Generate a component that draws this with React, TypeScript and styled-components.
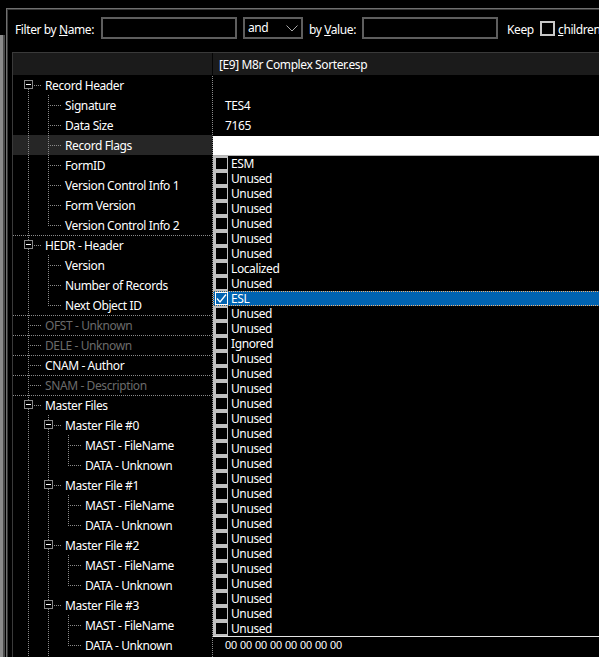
import React from 'react';
import styled, { createGlobalStyle, css } from 'styled-components';

const FONT = `"Noto Sans", "Open Sans", sans-serif`;
const LINE = '#8a8a8a';
const dotV = `repeating-linear-gradient(to bottom, ${LINE} 0 1px, transparent 1px 2px)`;
const dotH = `repeating-linear-gradient(to right, ${LINE} 0 1px, transparent 1px 2px)`;

const Global = createGlobalStyle`
  html, body { margin: 0; padding: 0; background: #000; }
  body { font-family: ${FONT}; font-size: 12px; letter-spacing: -0.4px; color: #fff; }
  * { box-sizing: border-box; }
`;

const Screen = styled.div`
  width: 599px;
  height: 657px;
  overflow: hidden;
  display: flex;
  background: #000;
`;

const Gutter = styled.div`
  flex: 0 0 5px;
  padding-top: 35px;
  display: flex;
`;

const GutterBar = styled.div`
  flex: 1;
  background: linear-gradient(to right, #8c8c8c 0 3px, #4a4a4a 3px 5px);
`;

const Panel = styled.div`
  flex: 0 0 620px;
  margin: 8px 0 0 1px;
  border-top: 1px solid #707070;
  border-left: 1px solid #707070;
  box-shadow: inset 1px 1px 0 #383838;
  display: flex;
  flex-direction: column;
`;

const FilterBar = styled.div`
  display: flex;
  align-items: center;
  padding: 8px 0 13px 8px;
  height: 43px;
  flex: 0 0 auto;
`;

const Label = styled.span<{ $w: number; $gap?: number }>`
  flex: 0 0 ${(p) => p.$w}px;
  margin-left: ${(p) => p.$gap ?? 0}px;
  white-space: nowrap;
  line-height: 22px;
  padding-top: 4px;
  color: #fff;
`;

const TextBox = styled.div`
  flex: 0 0 136px;
  height: 22px;
  border: 2px solid #5e5e5e;
  background: #000;
`;

const Combo = styled.div`
  flex: 0 0 60px;
  height: 22px;
  margin: 0 6px;
  border: 2px solid #5e5e5e;
  background: #000;
  display: flex;
  align-items: center;
  justify-content: space-between;
  padding: 0 3px 0 3px;
  line-height: 18px;
`;

const KeepBox = styled.div`
  flex: 0 0 15px;
  height: 15px;
  border: 2px solid #c8c8c8;
  background: #000;
  margin-right: 3px;
`;

const Grid = styled.div`
  flex: 1;
  margin-left: 5px;
  border-left: 1px solid #3a3a3a;
  border-top: 1px solid #3a3a3a;
  display: flex;
  flex-direction: column;
  min-height: 0;
`;

const Header = styled.div`
  display: flex;
  height: 22px;
  flex: 0 0 22px;
  background: #1b1b1b;
`;

const HeaderCell = styled.div<{ $w?: number }>`
  ${(p) =>
    p.$w
      ? css`
          flex: 0 0 ${p.$w}px;
          border-right: 1px solid #050505;
        `
      : css`
          flex: 1;
          padding: 1px 0 0 6px;
        `}
  line-height: 21px;
  white-space: nowrap;
`;

const Body = styled.div`
  display: flex;
  flex: 1;
  min-height: 0;
`;

const TreeCol = styled.div`
  flex: 0 0 200px;
  padding-right: 1px;
  background-image: ${dotV};
  background-size: 1px 100%;
  background-position: 199px 1px;
  background-repeat: no-repeat;
`;

const TreeRow = styled.div<{ $selected?: boolean; $sepTop?: boolean }>`
  height: 20px;
  display: flex;
  padding-left: 5px;
  background-color: ${(p) => (p.$selected ? '#262626' : 'transparent')};
  ${(p) =>
    p.$sepTop &&
    css`
      background-image: ${dotH};
      background-size: 100% 1px;
      background-position: 0 0;
      background-repeat: no-repeat;
    `}
`;

type VKind = 'none' | 'full' | 'top' | 'bottom';

const vLayer = (k: VKind) => {
  if (k === 'full') return { img: dotV, size: '1px 100%', pos: '10px 0' };
  if (k === 'top') return { img: dotV, size: '1px 11px', pos: '10px 0' };
  if (k === 'bottom') return { img: dotV, size: '1px 10px', pos: '10px 10px' };
  return null;
};

const Guide = styled.div<{ $v: VKind; $conn?: boolean }>`
  flex: 0 0 ${(p) => (p.$conn ? 24 : 20)}px;
  height: 20px;
  display: flex;
  align-items: flex-start;
  ${(p) => {
    const layers: { img: string; size: string; pos: string }[] = [];
    const v = vLayer(p.$v);
    if (v) layers.push(v);
    if (p.$conn) layers.push({ img: dotH, size: '13px 1px', pos: '10px 10px' });
    if (!layers.length) return '';
    return css`
      background-image: ${layers.map((l) => l.img).join(', ')};
      background-size: ${layers.map((l) => l.size).join(', ')};
      background-position: ${layers.map((l) => l.pos).join(', ')};
      background-repeat: no-repeat;
    `;
  }}
`;

const ExpandBox = styled.span`
  width: 9px;
  height: 9px;
  margin: 5px 0 0 6px;
  border: 1px solid #8a8a8a;
  background: #000;
  display: flex;
  align-items: center;
  justify-content: center;
`;

const Minus = styled.span`
  width: 5px;
  height: 1px;
  background: #fff;
`;

const NodeText = styled.span<{ $disabled?: boolean }>`
  margin-left: 3px;
  padding-top: 1px;
  line-height: 19px;
  white-space: nowrap;
  color: ${(p) => (p.$disabled ? '#6b6b6b' : '#fff')};
`;

const ValueCol = styled.div`
  flex: 1;
  min-width: 0;
`;

const ValueRow = styled.div<{ $small?: boolean }>`
  height: 20px;
  padding: 1px 0 0 12px;
  line-height: 19px;
  white-space: nowrap;
  font-size: ${(p) => (p.$small ? '11px' : '12px')};
  ${(p) =>
    p.$small &&
    css`
      letter-spacing: -0.1px;
      font-family: 'Liberation Sans', Arial, sans-serif;
    `}
`;

const EditRow = styled.div`
  height: 20px;
  position: relative;
  padding-top: 1px;
`;

const EditBar = styled.div`
  height: 19px;
  background: #fff;
`;

const DropList = styled.div`
  position: absolute;
  top: 20px;
  left: 0;
  right: 0;
  z-index: 2;
  background: #000;
  border-top: 1px solid #b4b4b4;
  border-bottom: 1px solid #e4e4e4;
`;

const Item = styled.div<{ $sel?: boolean }>`
  height: 15px;
  display: flex;
  align-items: stretch;
  overflow: hidden;
  ${(p) =>
    p.$sel &&
    css`
      background: #0063b1;
      outline: 1px dotted #f0b070;
      outline-offset: -1px;
    `}
`;

const CheckCell = styled.div<{ $sel?: boolean }>`
  flex: 0 0 15px;
  background: ${(p) => (p.$sel ? 'transparent' : '#c0c0c0')};
  padding: ${(p) => (p.$sel ? '1px 0 0 2px' : '2px 0 0 3px')};
`;

const Box = styled.div<{ $sel?: boolean }>`
  width: ${(p) => (p.$sel ? 13 : 11)}px;
  height: ${(p) => (p.$sel ? 13 : 11)}px;
  background: ${(p) => (p.$sel ? '#0063b1' : '#000')};
  ${(p) =>
    p.$sel &&
    css`
      border: 1px solid #fff;
      display: flex;
      align-items: center;
      justify-content: center;
    `}
`;

const ItemText = styled.span`
  margin-left: 3px;
  padding-top: 1px;
  line-height: 14px;
  white-space: nowrap;
`;

type Row = {
  label: string;
  level: number;
  kind: 'first' | 'mid' | 'last';
  anc: boolean[];
  box?: boolean;
  disabled?: boolean;
  sepTop?: boolean;
  selected?: boolean;
  value?: string;
  edit?: boolean;
};

const DATA00 = '00 00 00 00 00 00 00 00';

const rows: Row[] = [
  { label: 'Record Header', level: 0, kind: 'first', anc: [], box: true },
  { label: 'Signature', level: 1, kind: 'mid', anc: [true], value: 'TES4' },
  { label: 'Data Size', level: 1, kind: 'mid', anc: [true], value: '7165' },
  { label: 'Record Flags', level: 1, kind: 'mid', anc: [true], selected: true, edit: true },
  { label: 'FormID', level: 1, kind: 'mid', anc: [true] },
  { label: 'Version Control Info 1', level: 1, kind: 'mid', anc: [true] },
  { label: 'Form Version', level: 1, kind: 'mid', anc: [true] },
  { label: 'Version Control Info 2', level: 1, kind: 'last', anc: [true] },
  { label: 'HEDR - Header', level: 0, kind: 'mid', anc: [], box: true, sepTop: true },
  { label: 'Version', level: 1, kind: 'mid', anc: [true] },
  { label: 'Number of Records', level: 1, kind: 'mid', anc: [true] },
  { label: 'Next Object ID', level: 1, kind: 'last', anc: [true] },
  { label: 'OFST - Unknown', level: 0, kind: 'mid', anc: [], disabled: true, sepTop: true },
  { label: 'DELE - Unknown', level: 0, kind: 'mid', anc: [], disabled: true, sepTop: true },
  { label: 'CNAM - Author', level: 0, kind: 'mid', anc: [], sepTop: true },
  { label: 'SNAM - Description', level: 0, kind: 'mid', anc: [], disabled: true, sepTop: true },
  { label: 'Master Files', level: 0, kind: 'mid', anc: [], box: true, sepTop: true },
];

[0, 1, 2, 3].forEach((n) => {
  rows.push({ label: `Master File #${n}`, level: 1, kind: 'mid', anc: [true], box: true });
  rows.push({ label: 'MAST - FileName', level: 2, kind: 'mid', anc: [true, true] });
  rows.push({
    label: 'DATA - Unknown',
    level: 2,
    kind: 'last',
    anc: [true, true],
    value: n === 3 ? DATA00 : undefined,
  });
});
rows.push({ label: '', level: 1, kind: 'mid', anc: [true] });

const flags: string[] = [
  'ESM',
  'Unused',
  'Unused',
  'Unused',
  'Unused',
  'Unused',
  'Unused',
  'Localized',
  'Unused',
  'ESL',
  'Unused',
  'Unused',
  'Ignored',
  ...Array.from({ length: 19 }, () => 'Unused'),
];

const Chevron = () => (
  <svg width="12" height="7" viewBox="0 0 12 7">
    <polyline points="0.5,0.5 6,6 11.5,0.5" fill="none" stroke="#a8a8a8" strokeWidth="1" />
  </svg>
);

const Check = () => (
  <svg width="11" height="11" viewBox="0 0 11 11">
    <polyline points="1,5.5 4,9 10,1.5" fill="none" stroke="#fff" strokeWidth="1.3" />
  </svg>
);

const TreeNode: React.FC<{ r: Row }> = ({ r }) => {
  const own: VKind = r.kind === 'first' ? 'bottom' : r.kind === 'last' ? 'top' : 'full';
  return (
    <TreeRow $selected={r.selected} $sepTop={r.sepTop}>
      {r.anc.map((c, i) => (
        <Guide key={i} $v={c ? 'full' : 'none'} />
      ))}
      <Guide $v={own} $conn={!!r.label}>
        {r.box && (
          <ExpandBox>
            <Minus />
          </ExpandBox>
        )}
      </Guide>
      {r.label && <NodeText $disabled={r.disabled}>{r.label}</NodeText>}
    </TreeRow>
  );
};

export default function App() {
  return (
    <>
      <Global />
      <Screen>
        <Gutter>
          <GutterBar />
        </Gutter>
        <Panel>
          <FilterBar>
            <Label $w={86}>
              Filter by <u>N</u>ame:
            </Label>
            <TextBox />
            <Combo>
              <span>and</span>
              <Chevron />
            </Combo>
            <Label $w={53}>
              by <u>V</u>alue:
            </Label>
            <TextBox />
            <Label $w={33} $gap={9}>
              Keep
            </Label>
            <KeepBox />
            <Label $w={60}>
              <u>c</u>hildren
            </Label>
          </FilterBar>
          <Grid>
            <Header>
              <HeaderCell $w={200} />
              <HeaderCell>[E9] M8r Complex Sorter.esp</HeaderCell>
            </Header>
            <Body>
              <TreeCol>
                {rows.map((r, i) => (
                  <TreeNode key={i} r={r} />
                ))}
              </TreeCol>
              <ValueCol>
                {rows.map((r, i) =>
                  r.edit ? (
                    <EditRow key={i}>
                      <EditBar />
                      <DropList>
                        {flags.map((f, j) => {
                          const sel = f === 'ESL';
                          return (
                            <Item key={j} $sel={sel}>
                              <CheckCell $sel={sel}>
                                <Box $sel={sel}>{sel && <Check />}</Box>
                              </CheckCell>
                              <ItemText>{f}</ItemText>
                            </Item>
                          );
                        })}
                      </DropList>
                    </EditRow>
                  ) : (
                    <ValueRow key={i} $small={r.value === DATA00}>
                      {r.value}
                    </ValueRow>
                  )
                )}
              </ValueCol>
            </Body>
          </Grid>
        </Panel>
      </Screen>
    </>
  );
}
